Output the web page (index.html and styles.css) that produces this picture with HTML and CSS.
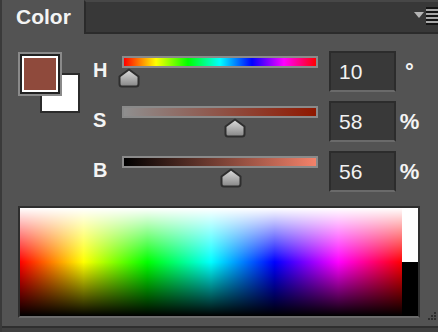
FILE: index.html
```html
<!DOCTYPE html>
<html>
<head>
<meta charset="utf-8">
<link rel="stylesheet" href="styles.css">
</head>
<body>
<div class="panel">
  <div class="header">
    <div class="tab">Color</div>
    <div class="strip">
      <svg class="menu" width="24" height="18" viewBox="0 0 24 18">
        <path d="M0 5 H10 L5 11 Z" fill="#b4b4b4"/>
        <rect x="12" y="0" width="12" height="18" fill="#141414"/>
        <rect x="12" y="2" width="12" height="2" fill="#a8a8a8"/>
        <rect x="12" y="6" width="12" height="2" fill="#a8a8a8"/>
        <rect x="12" y="10" width="12" height="2" fill="#a8a8a8"/>
        <rect x="12" y="14" width="12" height="2" fill="#a8a8a8"/>
      </svg>
    </div>
  </div>
  <div class="main">
    <div class="top">
      <div class="swatches">
        <div class="bg-swatch"></div>
        <div class="fg-swatch"><div class="fg-inner"></div></div>
      </div>
      <div class="rows">
        <div class="row">
          <div class="label">H</div>
          <div class="slider">
            <div class="bar bar-h"></div>
            <svg class="thumb" style="left:-4px" width="22" height="20" viewBox="0 0 22 20"><use href="#thumb"/></svg>
          </div>
          <div class="field-input">10</div>
          <div class="unit">°</div>
        </div>
        <div class="row">
          <div class="label">S</div>
          <div class="slider">
            <div class="bar bar-s"></div>
            <svg class="thumb" style="left:102px" width="22" height="20" viewBox="0 0 22 20"><use href="#thumb"/></svg>
          </div>
          <div class="field-input">58</div>
          <div class="unit">%</div>
        </div>
        <div class="row">
          <div class="label">B</div>
          <div class="slider">
            <div class="bar bar-b"></div>
            <svg class="thumb" style="left:98px" width="22" height="20" viewBox="0 0 22 20"><use href="#thumb"/></svg>
          </div>
          <div class="field-input">56</div>
          <div class="unit">%</div>
        </div>
      </div>
    </div>
    <div class="picker">
      <div class="spectrum"></div>
      <div class="ramp"><div class="ramp-white"></div><div class="ramp-black"></div></div>
    </div>
  </div>
  <div class="footer"></div>
  <svg class="grip" width="10" height="10" viewBox="0 0 10 10">
    <rect x="7" y="0" width="2" height="2" fill="#2e2e2e"/>
    <rect x="4" y="3" width="2" height="2" fill="#2e2e2e"/>
    <rect x="7" y="3" width="2" height="2" fill="#2e2e2e"/>
    <rect x="1" y="6" width="2" height="2" fill="#2e2e2e"/>
    <rect x="4" y="6" width="2" height="2" fill="#2e2e2e"/>
    <rect x="7" y="6" width="2" height="2" fill="#2e2e2e"/>
  </svg>
</div>
<svg width="0" height="0" class="defs">
  <defs>
    <linearGradient id="tg" x1="0" y1="0" x2="0" y2="1">
      <stop offset="0" stop-color="#dedede"/>
      <stop offset="1" stop-color="#858585"/>
    </linearGradient>
    <symbol id="thumb" viewBox="0 0 22 20">
      <path d="M11 1.5 L20.5 8.5 V16 Q20.5 18.5 18 18.5 H4 Q1.5 18.5 1.5 16 V8.5 Z" fill="url(#tg)" stroke="#2e2e2e" stroke-width="2" stroke-linejoin="round"/>
    </symbol>
  </defs>
</svg>
</body>
</html>
```
FILE: styles.css
```css
html, body {
  margin: 0;
  padding: 0;
  background: #535353;
}
.defs {
  position: absolute;
}
.panel {
  position: relative;
  width: 438px;
  height: 332px;
  box-sizing: border-box;
  border-left: 2px solid #3a3a3a;
  background: #535353;
  display: flex;
  flex-direction: column;
  font-family: "Liberation Sans", Arial, sans-serif;
  color: #f2f2f2;
}
.header {
  display: flex;
  height: 34px;
  flex: none;
}
.tab {
  width: 82px;
  box-sizing: border-box;
  padding-left: 14px;
  font-weight: bold;
  font-size: 21px;
  line-height: 33px;
  color: #f4f4f4;
}
.strip {
  flex: 1;
  box-sizing: border-box;
  background: #383838;
  border-top: 2px solid #474747;
  border-left: 2px solid #2a2a2a;
  border-bottom: 2px solid #2b2b2b;
  display: flex;
  justify-content: flex-end;
  align-items: flex-start;
}
.menu {
  display: block;
  margin-top: 5px;
}
.main {
  flex: 1;
  padding: 17px 0 0 16px;
}
.top {
  display: flex;
}
.swatches {
  position: relative;
  width: 62px;
  height: 61px;
  margin-top: 1px;
  flex: none;
}
.fg-swatch {
  position: absolute;
  left: 0;
  top: 0;
  width: 44px;
  height: 44px;
  box-sizing: border-box;
  border: 2px solid #8a8a8a;
  background: #222;
  padding: 2px;
}
.fg-inner {
  width: 100%;
  height: 100%;
  box-sizing: border-box;
  border: 2px solid #fff;
  background: #8f4a3c;
}
.bg-swatch {
  position: absolute;
  left: 22px;
  top: 21px;
  width: 40px;
  height: 40px;
  box-sizing: border-box;
  border: 2px solid #2b2b2b;
  background: #fff;
}
.rows {
  margin-left: 13px;
  display: flex;
  flex-direction: column;
}
.row {
  height: 50px;
  display: flex;
  align-items: flex-start;
}
.label {
  width: 29px;
  font-weight: bold;
  font-size: 20px;
  line-height: 38px;
  color: #f4f4f4;
}
.slider {
  position: relative;
  width: 196px;
  height: 50px;
}
.bar {
  margin-top: 5px;
  height: 12px;
  box-sizing: border-box;
  border: 2px solid #8a8a8a;
}
.bar-h {
  background: linear-gradient(to right, #f00, #ff0, #0f0, #0ff, #00f, #f0f, #f00);
}
.bar-s {
  background: linear-gradient(to right, #8f8f8f, #8f1800);
}
.bar-b {
  background: linear-gradient(to right, #000, #f3826a);
}
.thumb {
  position: absolute;
  top: 17px;
  display: block;
}
.field-input {
  margin-left: 11px;
  width: 67px;
  height: 41px;
  box-sizing: border-box;
  border: 2px solid #2c2c2c;
  border-bottom-color: #6a6a6a;
  background: #393939;
  padding-left: 8px;
  font-size: 21px;
  line-height: 37px;
  color: #f2f2f2;
}
.unit {
  margin-left: 3px;
  width: 21px;
  text-align: center;
  font-weight: bold;
  font-size: 22px;
  line-height: 41px;
  color: #f4f4f4;
}
.picker {
  margin-top: 5px;
  width: 402px;
  height: 112px;
  box-sizing: border-box;
  border: 2px solid #2e2e2e;
  border-bottom-color: #6b6b6b;
  display: flex;
}
.spectrum {
  flex: 1;
  background:
    linear-gradient(to bottom, #fff 0%, rgba(255,255,255,0) 50%, rgba(0,0,0,0) 50%, #000 100%),
    linear-gradient(to right, #f00, #ff0, #0f0, #0ff, #00f, #f0f, #f00);
}
.ramp {
  width: 16px;
  display: flex;
  flex-direction: column;
}
.ramp-white {
  flex: 1;
  background: #fff;
}
.ramp-black {
  flex: 1;
  background: #000;
}
.footer {
  flex: none;
  height: 6px;
  box-sizing: border-box;
  border-top: 2px solid #2f2f2f;
  background: #404040;
}
.grip {
  position: absolute;
  right: 1px;
  bottom: 10px;
}
```
